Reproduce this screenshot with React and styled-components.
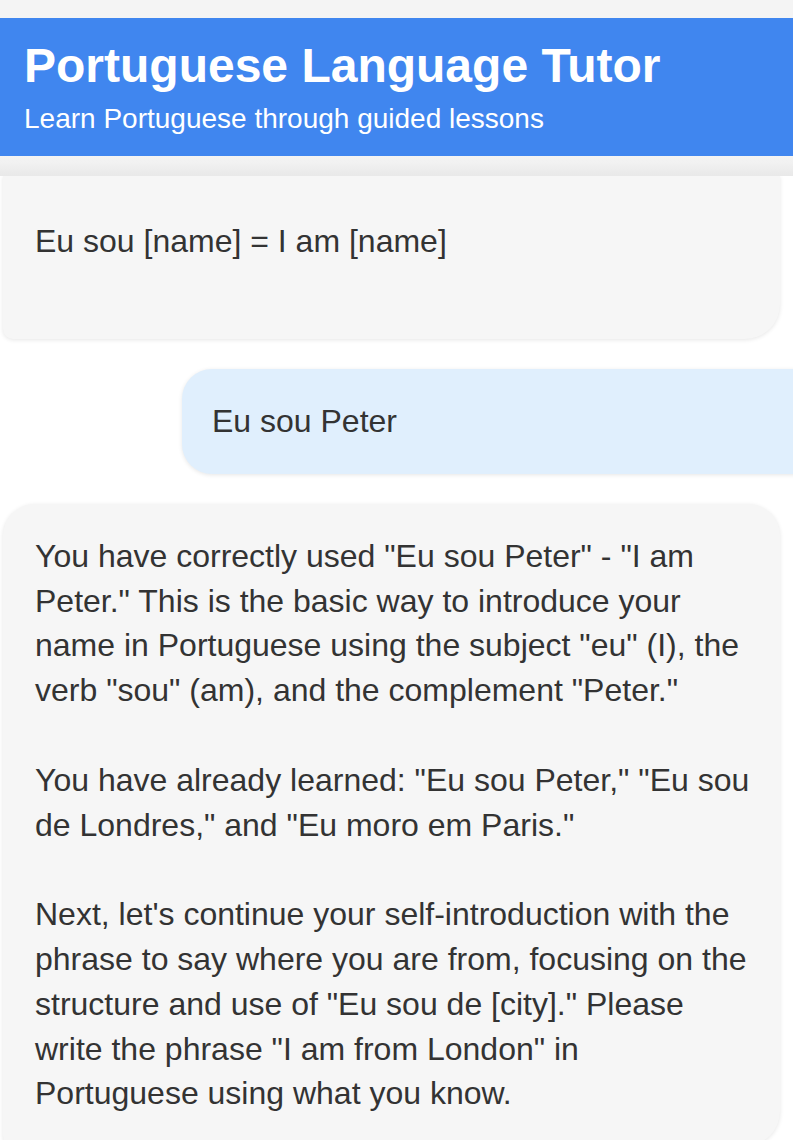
import React from "react";
import styled, { createGlobalStyle } from "styled-components";

const Global = createGlobalStyle`
  html, body {
    margin: 0;
    padding: 0;
    background: #ffffff;
    overflow-x: hidden;
  }
  body {
    font-family: "Liberation Sans", Arial, sans-serif;
    color: #333333;
  }
  * { box-sizing: border-box; }
`;

const Page = styled.div`
  width: 100%;
  min-height: 1140px;
  display: flex;
  flex-direction: column;
`;

const HeaderWrap = styled.div`
  position: sticky;
  top: 0;
  z-index: 2;
  padding: 18px 0 20px;
  background: linear-gradient(
    to bottom,
    #f4f4f4 0px,
    #f4f4f4 155px,
    #f1f1f1 163px,
    #e9e9e9 175px
  );
`;

const Header = styled.header`
  background: #4086ef;
  color: #ffffff;
  padding: 20px 24px 21px;
`;

const Title = styled.h1`
  margin: 0;
  font-size: 48px;
  line-height: 1.15;
  font-weight: 700;
`;

const Subtitle = styled.p`
  margin: 10px 0 0;
  font-size: 28px;
  line-height: 1.15;
  font-weight: 400;
`;

const Messages = styled.main`
  display: flex;
  flex-direction: column;
  gap: 30px;
  padding: 0 0 0 3px;
`;

const Bubble = styled.div`
  font-size: 32px;
  line-height: 1.4;
  box-shadow: 0 1px 4px rgba(0, 0, 0, 0.1);
`;

const AssistantBubble = styled(Bubble)`
  background: #f6f6f6;
  margin-right: 13px;
  padding: ${(p) => (p.$cut ? "43px 30px 30px 32px" : "30px 30px 30px 32px")};
  border-radius: ${(p) => (p.$cut ? "0 0 35px 10px" : "32px 32px 35px 10px")};
`;

const UserBubble = styled(Bubble)`
  background: #e0effd;
  margin-left: 179px;
  margin-right: -40px;
  padding: 30px;
  border-radius: 30px 30px 10px 30px;
`;

const Para = styled.p`
  margin: 0 0 44.8px;
  &:last-child {
    margin-bottom: ${(p) => (p.$trail ? "44.8px" : "0")};
  }
`;

export default function App() {
  return (
    <Page>
      <Global />
      <HeaderWrap>
        <Header>
          <Title>Portuguese Language Tutor</Title>
          <Subtitle>Learn Portuguese through guided lessons</Subtitle>
        </Header>
      </HeaderWrap>
      <Messages>
        <AssistantBubble $cut>
          <Para $trail>Eu sou [name] = I am [name]</Para>
        </AssistantBubble>
        <UserBubble>
          <Para>Eu sou Peter</Para>
        </UserBubble>
        <AssistantBubble>
          <Para>
            You have correctly used "Eu sou Peter" - "I am Peter." This is the
            basic way to introduce your name in Portuguese using the subject
            "eu" (I), the verb "sou" (am), and the complement "Peter."
          </Para>
          <Para>
            You have already learned: "Eu sou Peter," "Eu sou de Londres," and
            "Eu moro em Paris."
          </Para>
          <Para>
            Next, let's continue your self-introduction with the phrase to say
            where you are from, focusing on the structure and use of "Eu sou de
            [city]." Please write the phrase "I am from London" in Portuguese
            using what you know.
          </Para>
        </AssistantBubble>
      </Messages>
    </Page>
  );
}
